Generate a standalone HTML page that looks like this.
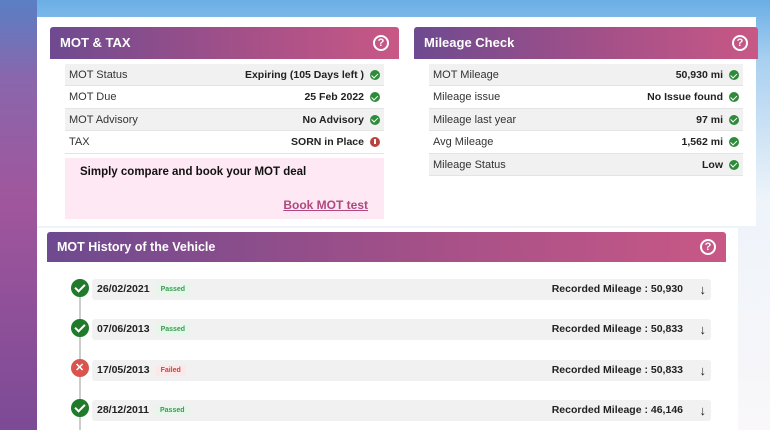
<!DOCTYPE html>
<html><head><style>
*{margin:0;padding:0;box-sizing:border-box}
body{width:770px;height:430px;overflow:hidden;position:relative;font-family:"Liberation Sans",sans-serif;background:linear-gradient(180deg,#6aaee6 0,#a9d0f0 60px,#eef4fa 200px,#f9f7f9 430px)}
.left{position:absolute;left:0;top:0;width:37px;height:430px;background:linear-gradient(180deg,#5a7fc4 0,#8a66ac 80px,#a0569c 200px,#7c4a96 430px)}
.top{position:absolute;left:37px;top:17px;width:719px;height:209px;background:#fff}
.bot{position:absolute;left:37px;top:228px;width:701px;height:202px;background:#fff}
.hdr{position:absolute;height:32px;background:linear-gradient(90deg,#6e4a90,#a45088 55%,#c85886);color:#fff;font-weight:bold;font-size:13px;line-height:32px;padding-left:10px;border-radius:3px 3px 0 0}
.q{position:absolute;right:10px;top:8px;width:16px;height:16px;border:2px solid #fff;border-radius:50%;font-size:11px;line-height:12px;text-align:center}
.row{position:absolute;height:22.4px;font-size:11px;line-height:22px;color:#333;padding-left:4px;border-bottom:1px solid #e4e4e4}
.row.g{background:#f1f1f1}
.row b{position:absolute;right:20px;color:#222;font-size:10.5px}
.ic{position:absolute;right:4px;top:6px;width:10px;height:10px;border-radius:50%;background:#2e8b3a}
.ic:after{content:"";position:absolute;left:3px;top:1.5px;width:2.5px;height:4.5px;border:solid #fff;border-width:0 1.5px 1.5px 0;transform:rotate(45deg)}
.ic.r{background:#b8453b}
.ic.r:after{border:0;width:1.5px;height:5px;left:4.2px;top:1.5px;background:#fff;transform:none}
.pink{position:absolute;left:65px;top:158px;width:319px;height:61px;background:#fde8f4}
.bar{position:absolute;left:92px;width:619px;height:21px;background:#f1f1f2;border-radius:3px;font-size:10.5px;line-height:21px;font-weight:bold;color:#222;padding-left:5px}
.bar .t{font-size:7px;font-weight:bold;padding:2px 5px;margin-left:6px;border-radius:2px;background:#e6f6ea;color:#3a9a52;vertical-align:1px}
.bar .t.f{background:#fce8e8;color:#d04040}
.bar .m{position:absolute;right:28px}
.bar .a{position:absolute;right:5px;font-size:13px;font-weight:bold}
.dot{position:absolute;left:71px;width:18px;height:18px;border-radius:50%;background:#1f7a2c}
.dot:after{content:"";position:absolute;left:6px;top:3px;width:4px;height:8px;border:solid #fff;border-width:0 2px 2px 0;transform:rotate(45deg)}
.dot.x{background:#d9534f}
.dot.x:after{content:"✕";border:0;transform:none;width:auto;height:auto;left:4px;top:1px;color:#fff;font-size:11px;line-height:16px;font-weight:bold}
.line{position:absolute;left:79px;top:290px;width:2px;height:140px;background:#ccc}
</style></head><body>
<div class="left"></div>
<div class="top"></div>
<div class="bot"></div>

<div class="hdr" style="left:50px;top:27px;width:349px">MOT &amp; TAX<div class="q">?</div></div>
<div class="row g" style="left:65px;top:64px;width:319px">MOT Status<b>Expiring (105 Days left )</b><span class="ic"></span></div>
<div class="row" style="left:65px;top:86.4px;width:319px">MOT Due<b>25 Feb 2022</b><span class="ic"></span></div>
<div class="row g" style="left:65px;top:108.8px;width:319px">MOT Advisory<b>No Advisory</b><span class="ic"></span></div>
<div class="row" style="left:65px;top:131.2px;width:319px">TAX<b>SORN in Place</b><span class="ic r"></span></div>
<div class="pink"><div style="position:absolute;left:15px;top:8px;font-weight:bold;font-size:11.5px;color:#111">Simply compare and book your MOT deal</div><div style="position:absolute;right:16px;top:40px;font-weight:bold;font-size:12px;color:#b0487e;text-decoration:underline">Book MOT test</div></div>

<div class="hdr" style="left:414px;top:27px;width:344px">Mileage Check<div class="q">?</div></div>
<div class="row g" style="left:429px;top:64px;width:314px">MOT Mileage<b>50,930 mi</b><span class="ic"></span></div>
<div class="row" style="left:429px;top:86.4px;width:314px">Mileage issue<b>No Issue found</b><span class="ic"></span></div>
<div class="row g" style="left:429px;top:108.8px;width:314px">Mileage last year<b>97 mi</b><span class="ic"></span></div>
<div class="row" style="left:429px;top:131.2px;width:314px">Avg Mileage<b>1,562 mi</b><span class="ic"></span></div>
<div class="row g" style="left:429px;top:153.6px;width:314px">Mileage Status<b>Low</b><span class="ic"></span></div>

<div class="hdr" style="left:47px;top:232px;width:679px;height:30px;line-height:30px;font-size:12.5px">MOT History of the Vehicle<div class="q" style="top:7px">?</div></div>
<div class="line"></div>
<div class="bar" style="top:279px">26/02/2021<span class="t">Passed</span><span class="m">Recorded Mileage : 50,930</span><span class="a">↓</span></div>
<div class="bar" style="top:319px">07/06/2013<span class="t">Passed</span><span class="m">Recorded Mileage : 50,833</span><span class="a">↓</span></div>
<div class="bar" style="top:360px">17/05/2013<span class="t f">Failed</span><span class="m">Recorded Mileage : 50,833</span><span class="a">↓</span></div>
<div class="bar" style="top:400px">28/12/2011<span class="t">Passed</span><span class="m">Recorded Mileage : 46,146</span><span class="a">↓</span></div>
<div class="dot" style="top:279px"></div>
<div class="dot" style="top:319px"></div>
<div class="dot x" style="top:359px"></div>
<div class="dot" style="top:399px"></div>
</body></html>
